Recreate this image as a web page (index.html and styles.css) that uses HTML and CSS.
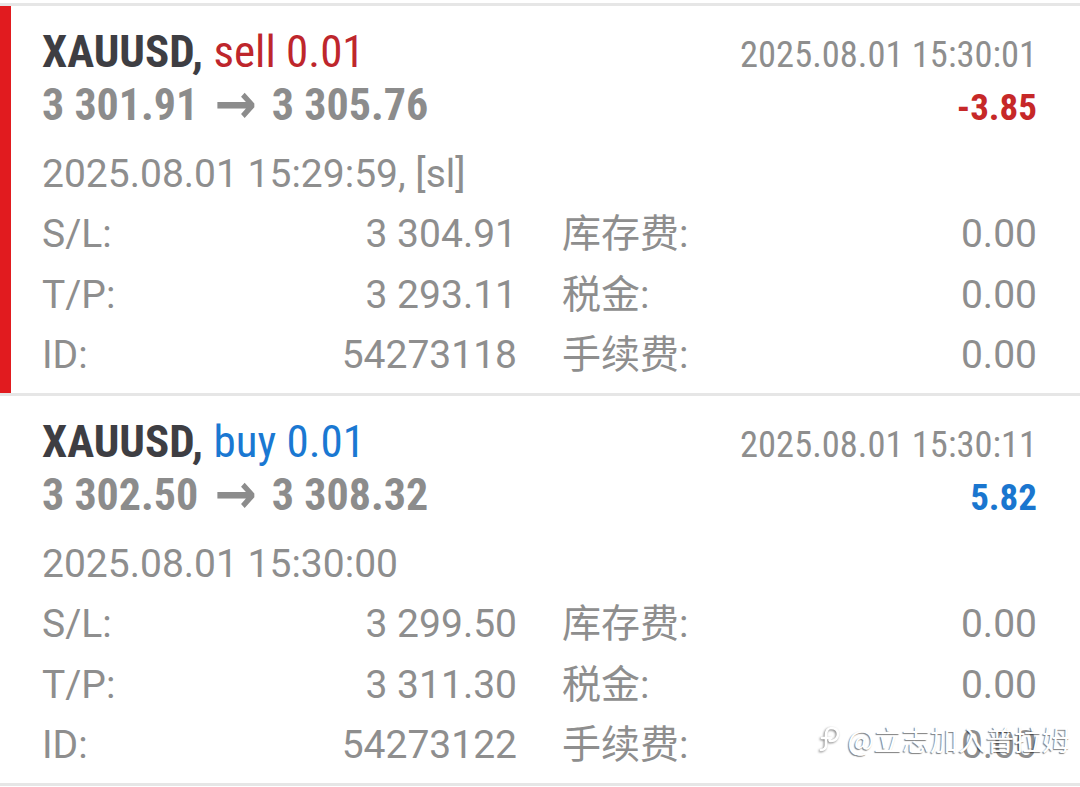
FILE: index.html
```html
<!DOCTYPE html>
<html lang="zh-CN">
<head>
    <meta charset="UTF-8">
    <meta name="viewport" content="width=device-width, initial-scale=1.0">
    <title>交易历史</title>
    <link rel="stylesheet" href="styles.css">
</head>
<body>
    <div class="deal-list">
        <!-- 选中的订单 -->
        <div class="deal active">
            <div class="deal-head">
                <div class="symbol">XAUUSD, <span class="sell">sell 0.01</span></div>
                <div class="close-time">2025.08.01 15:30:01</div>
            </div>
            <div class="deal-head">
                <div class="prices">3 301.91 <span class="arrow">→</span> 3 305.76</div>
                <div class="profit loss">-3.85</div>
            </div>
            <div class="open-time">2025.08.01 15:29:59, [sl]</div>
            <div class="fields">
                <div class="field"><span>S/L:</span><span>3 304.91</span></div>
                <div class="field"><span>库存费:</span><span>0.00</span></div>
                <div class="field"><span>T/P:</span><span>3 293.11</span></div>
                <div class="field"><span>税金:</span><span>0.00</span></div>
                <div class="field"><span>ID:</span><span>54273118</span></div>
                <div class="field"><span>手续费:</span><span>0.00</span></div>
            </div>
        </div>

        <div class="deal">
            <div class="deal-head">
                <div class="symbol">XAUUSD, <span class="buy">buy 0.01</span></div>
                <div class="close-time">2025.08.01 15:30:11</div>
            </div>
            <div class="deal-head">
                <div class="prices">3 302.50 <span class="arrow">→</span> 3 308.32</div>
                <div class="profit gain">5.82</div>
            </div>
            <div class="open-time">2025.08.01 15:30:00</div>
            <div class="fields">
                <div class="field"><span>S/L:</span><span>3 299.50</span></div>
                <div class="field"><span>库存费:</span><span>0.00</span></div>
                <div class="field"><span>T/P:</span><span>3 311.30</span></div>
                <div class="field"><span>税金:</span><span>0.00</span></div>
                <div class="field"><span>ID:</span><span>54273122</span></div>
                <div class="field"><span>手续费:</span><span>0.00</span></div>
            </div>
        </div>
    </div>

    <div class="watermark">
        <svg class="wm-logo" width="24" height="30" viewBox="0 0 24 30">
            <path d="M13 4c-3 0-5 3-5 7v10c0 3-2 5-5 5M4 14h7M13 4c4 0 7 2 7 6s-3 7-7 7c-2 0-2-2 0-3" fill="none" stroke="#fff" stroke-width="2.6" stroke-linecap="round"/>
        </svg>
        <span>@立志加入普拉姆</span>
    </div>
</body>
</html>
```

FILE: styles.css
```css
* {
    margin: 0;
    padding: 0;
    box-sizing: border-box;
}
body {
    font-family: Roboto, 'Noto Sans CJK SC', sans-serif;
    background: white;
    color: #8e8e8e;
    width: 1080px;
    height: 787px;
    overflow: hidden;
    position: relative;
}
.deal-list {
    margin-top: 3px;
    border-top: 3px solid #e6e6e6;
}
.deal {
    height: 390px;
    padding: 21px 43px 0 42px;
    border-bottom: 3px solid #e6e6e6;
    background: white;
}
.deal.active {
    box-shadow: inset 11px 0 0 #e11b1f;
}
.deal-head {
    display: flex;
    justify-content: space-between;
    align-items: baseline;
    line-height: 50px;
    font-family: 'Roboto Condensed', Roboto, sans-serif;
    font-stretch: condensed;
}
.symbol {
    font-size: 45px;
    font-weight: 700;
    color: #3e3e43;
}
.symbol span {
    font-weight: 400;
}
.sell {
    color: #be262c;
}
.buy {
    color: #1a78d2;
}
.close-time {
    font-size: 36.5px;
}
.prices {
    font-size: 44px;
    font-weight: 700;
    color: #8c8c8c;
}
.arrow {
    font-family: 'DejaVu Sans', sans-serif;
    font-size: 56px;
    font-weight: 700;
    line-height: 0;
    margin: 0 5px 0 6px;
    vertical-align: -3px;
}
.profit {
    font-size: 37px;
    font-weight: 700;
}
.loss {
    color: #c62828;
}
.gain {
    color: #1a76cf;
}
.open-time {
    margin-top: 11px;
    font-size: 39px;
    line-height: 60px;
}
.fields {
    display: grid;
    grid-template-columns: 1fr 1fr;
    column-gap: 45px;
    font-size: 39px;
    line-height: 60.5px;
}
.field {
    display: flex;
    justify-content: space-between;
}
.watermark {
    position: absolute;
    right: 10px;
    bottom: 28px;
    display: flex;
    align-items: center;
    gap: 6px;
    font-size: 28px;
    color: white;
    font-family: 'Noto Sans CJK SC', sans-serif;
    text-shadow: -1px 1px 1px rgba(0, 0, 0, 0.5);
}
.wm-logo {
    filter: drop-shadow(-1px 1px 1px rgba(0, 0, 0, 0.5));
}
```
